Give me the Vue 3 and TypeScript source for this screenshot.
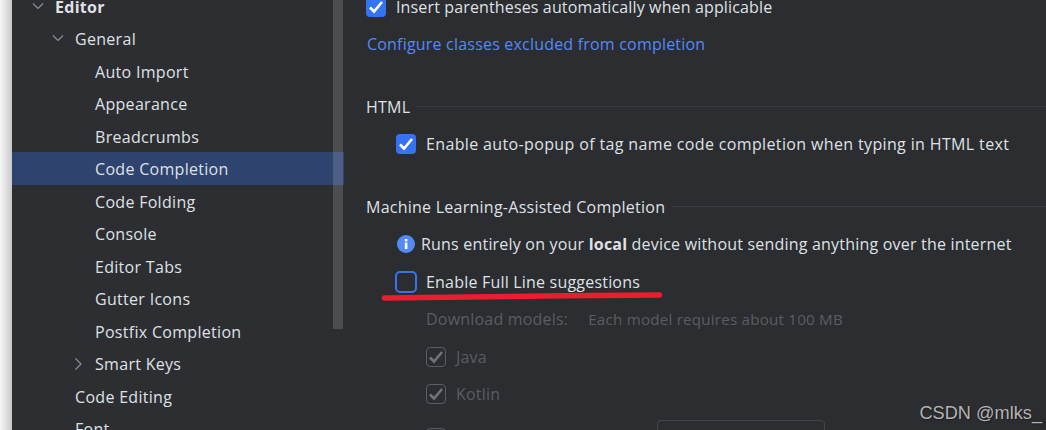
<script setup lang="ts">
type TreeRow = {
  label: string;
  level: number;
  arrow?: 'open' | 'closed';
  bold?: boolean;
  selected?: boolean;
};

const rows: TreeRow[] = [
  { label: 'Editor', level: 0, arrow: 'open', bold: true },
  { label: 'General', level: 1, arrow: 'open' },
  { label: 'Auto Import', level: 2 },
  { label: 'Appearance', level: 2 },
  { label: 'Breadcrumbs', level: 2 },
  { label: 'Code Completion', level: 2, selected: true },
  { label: 'Code Folding', level: 2 },
  { label: 'Console', level: 2 },
  { label: 'Editor Tabs', level: 2 },
  { label: 'Gutter Icons', level: 2 },
  { label: 'Postfix Completion', level: 2 },
  { label: 'Smart Keys', level: 2, arrow: 'closed' },
  { label: 'Code Editing', level: 1 },
  { label: 'Font', level: 1 },
];

const models = ['Java', 'Kotlin'];
</script>

<template>
  <div class="window">
    <div class="edge"></div>

    <aside class="sidebar">
      <div class="tree">
        <div
          v-for="row in rows"
          :key="row.label"
          class="tree-row"
          :class="[`level-${row.level}`, { selected: row.selected, bold: row.bold }]"
        >
          <svg v-if="row.arrow" class="arrow" width="12" height="12" viewBox="0 0 12 12">
            <path v-if="row.arrow === 'open'" d="M1 2.5 L6 7.5 L11 2.5" />
            <path v-else d="M3.5 0.5 L9 6 L3.5 11.5" />
          </svg>
          <span>{{ row.label }}</span>
        </div>
      </div>
      <div class="scrollbar"></div>
    </aside>

    <main class="content">
      <label class="line narrow">
        <span class="box checked">
          <svg width="20" height="20" viewBox="0 0 20 20"><path d="M4 10.5 L8 14.5 L16 5" /></svg>
        </span>
        Insert parentheses automatically when applicable
      </label>
      <a class="line link">Configure classes excluded from completion</a>

      <div class="section first">
        <span>HTML</span>
        <i class="rule"></i>
      </div>
      <label class="line indent wide">
        <span class="box checked">
          <svg width="20" height="20" viewBox="0 0 20 20"><path d="M4 10.5 L8 14.5 L16 5" /></svg>
        </span>
        Enable auto-popup of tag name code completion when typing in HTML text
      </label>

      <div class="section">
        <span>Machine Learning-Assisted Completion</span>
        <i class="rule"></i>
      </div>
      <div class="line info-line">
        <svg class="info" width="18" height="18" viewBox="0 0 18 18">
          <circle cx="9" cy="9" r="9" fill="#548af7" />
          <rect x="7.8" y="7.6" width="2.6" height="6.4" fill="#fff" />
          <rect x="7.8" y="4" width="2.6" height="2.4" fill="#fff" />
        </svg>
        <span>Runs entirely on your <b>local</b> device without sending anything over the internet</span>
      </div>
      <label class="line indent">
        <span class="box focused"></span>
        Enable Full Line suggestions
      </label>

      <div class="line download">
        <span>Download models:</span>
        <small>Each model requires about 100 MB</small>
      </div>
      <label v-for="name in models" :key="name" class="line indent muted">
        <span class="box disabled">
          <svg width="20" height="20" viewBox="0 0 20 20"><path d="M4 10.5 L8 14.5 L16 5" /></svg>
        </span>
        {{ name }}
      </label>
      <div class="line indent muted last">
        <span class="box disabled"></span>
        <span class="model-button"></span>
      </div>
    </main>

    <svg class="marker" width="300" height="20" viewBox="0 0 300 20">
      <path d="M6.5 13 C90 12 190 10.5 281.5 10" />
    </svg>
    <div class="watermark">CSDN @mlks_</div>
  </div>
</template>

<style scoped>
.window {
  position: relative;
  display: flex;
  width: 1046px;
  height: 430px;
  overflow: hidden;
  background: #2b2d30;
  color: #dfe1e5;
  font-family: "Open Sans", "Noto Sans", sans-serif;
  font-size: 16px;
  letter-spacing: 0.2px;
}

.edge {
  width: 12px;
  flex: none;
  background: linear-gradient(to right, #f8f8f8, #c8c8c8);
}

.sidebar {
  position: relative;
  width: 332px;
  flex: none;
  background: #2d2e32;
  letter-spacing: 0.3px;
}

.tree {
  margin-top: -10.25px;
}

.tree-row {
  position: relative;
  display: flex;
  align-items: center;
  box-sizing: border-box;
  height: 32.5px;
  padding-top: 1px;
}

.level-0 {
  padding-left: 43px;
}

.level-1 {
  padding-left: 63px;
}

.level-2 {
  padding-left: 83px;
}

.bold {
  font-weight: 700;
}

.selected {
  background: #2e436e;
}

.arrow {
  position: absolute;
  margin-left: -23px;
  fill: none;
  stroke: #8c8f94;
  stroke-width: 1.2;
}

.scrollbar {
  position: absolute;
  top: 0;
  right: 1px;
  width: 10px;
  height: 329px;
  background: rgba(255, 255, 255, 0.15);
}

.content {
  flex: 1;
  display: flex;
  flex-direction: column;
  margin-top: -12px;
  padding-left: 22px;
}

.line {
  display: flex;
  align-items: center;
  height: 37.5px;
  flex: none;
  white-space: nowrap;
}

.indent {
  padding-left: 30px;
}

.narrow {
  letter-spacing: 0.14px;
}

.wide {
  letter-spacing: 0.36px;
}

.link {
  color: #548af7;
  padding-left: 1px;
}

.section {
  display: flex;
  align-items: center;
  gap: 7px;
  height: 37.5px;
  flex: none;
  margin-top: 25px;
  letter-spacing: 0.25px;
}

.rule {
  flex: 1;
  height: 1px;
  background: #393b40;
}

.box {
  display: flex;
  align-items: center;
  justify-content: center;
  box-sizing: border-box;
  width: 20px;
  height: 20px;
  margin-right: 10px;
  border-radius: 4px;
  flex: none;
}

.box svg {
  flex: none;
  fill: none;
  stroke: #fff;
  stroke-width: 2.6;
}

.checked {
  background: #3574f0;
}

.focused {
  width: 22px;
  height: 22px;
  margin: 0 9px 0 -1px;
  border: 2px solid #3574f0;
  border-radius: 5px;
}

.disabled {
  border: 1px solid #5a5d63;
}

.disabled svg {
  stroke: #6f737a;
}

.info-line {
  padding-left: 31px;
}

.info {
  margin-right: 6px;
}

.download {
  padding-left: 60px;
  color: #5a5d63;
}

.download small {
  margin-left: 20px;
  font-size: 15.2px;
}

.muted {
  padding-left: 60px;
  color: #5a5d63;
}

.last {
  height: 49.5px;
}

.model-button {
  box-sizing: border-box;
  width: 168px;
  height: 36px;
  margin-left: 201px;
  border: 1px solid #43454a;
  border-radius: 4px;
}

.marker {
  position: absolute;
  left: 378px;
  top: 285px;
  fill: none;
  stroke: #ed1c2e;
  stroke-width: 5.5;
  stroke-linecap: round;
}

.watermark {
  position: absolute;
  right: 4px;
  bottom: 6px;
  color: #b3b3b3;
  font-family: "Liberation Sans", sans-serif;
  font-size: 18.2px;
  letter-spacing: 0;
  text-shadow: 1px 1px 1px rgba(0, 0, 0, 0.4);
}
</style>
